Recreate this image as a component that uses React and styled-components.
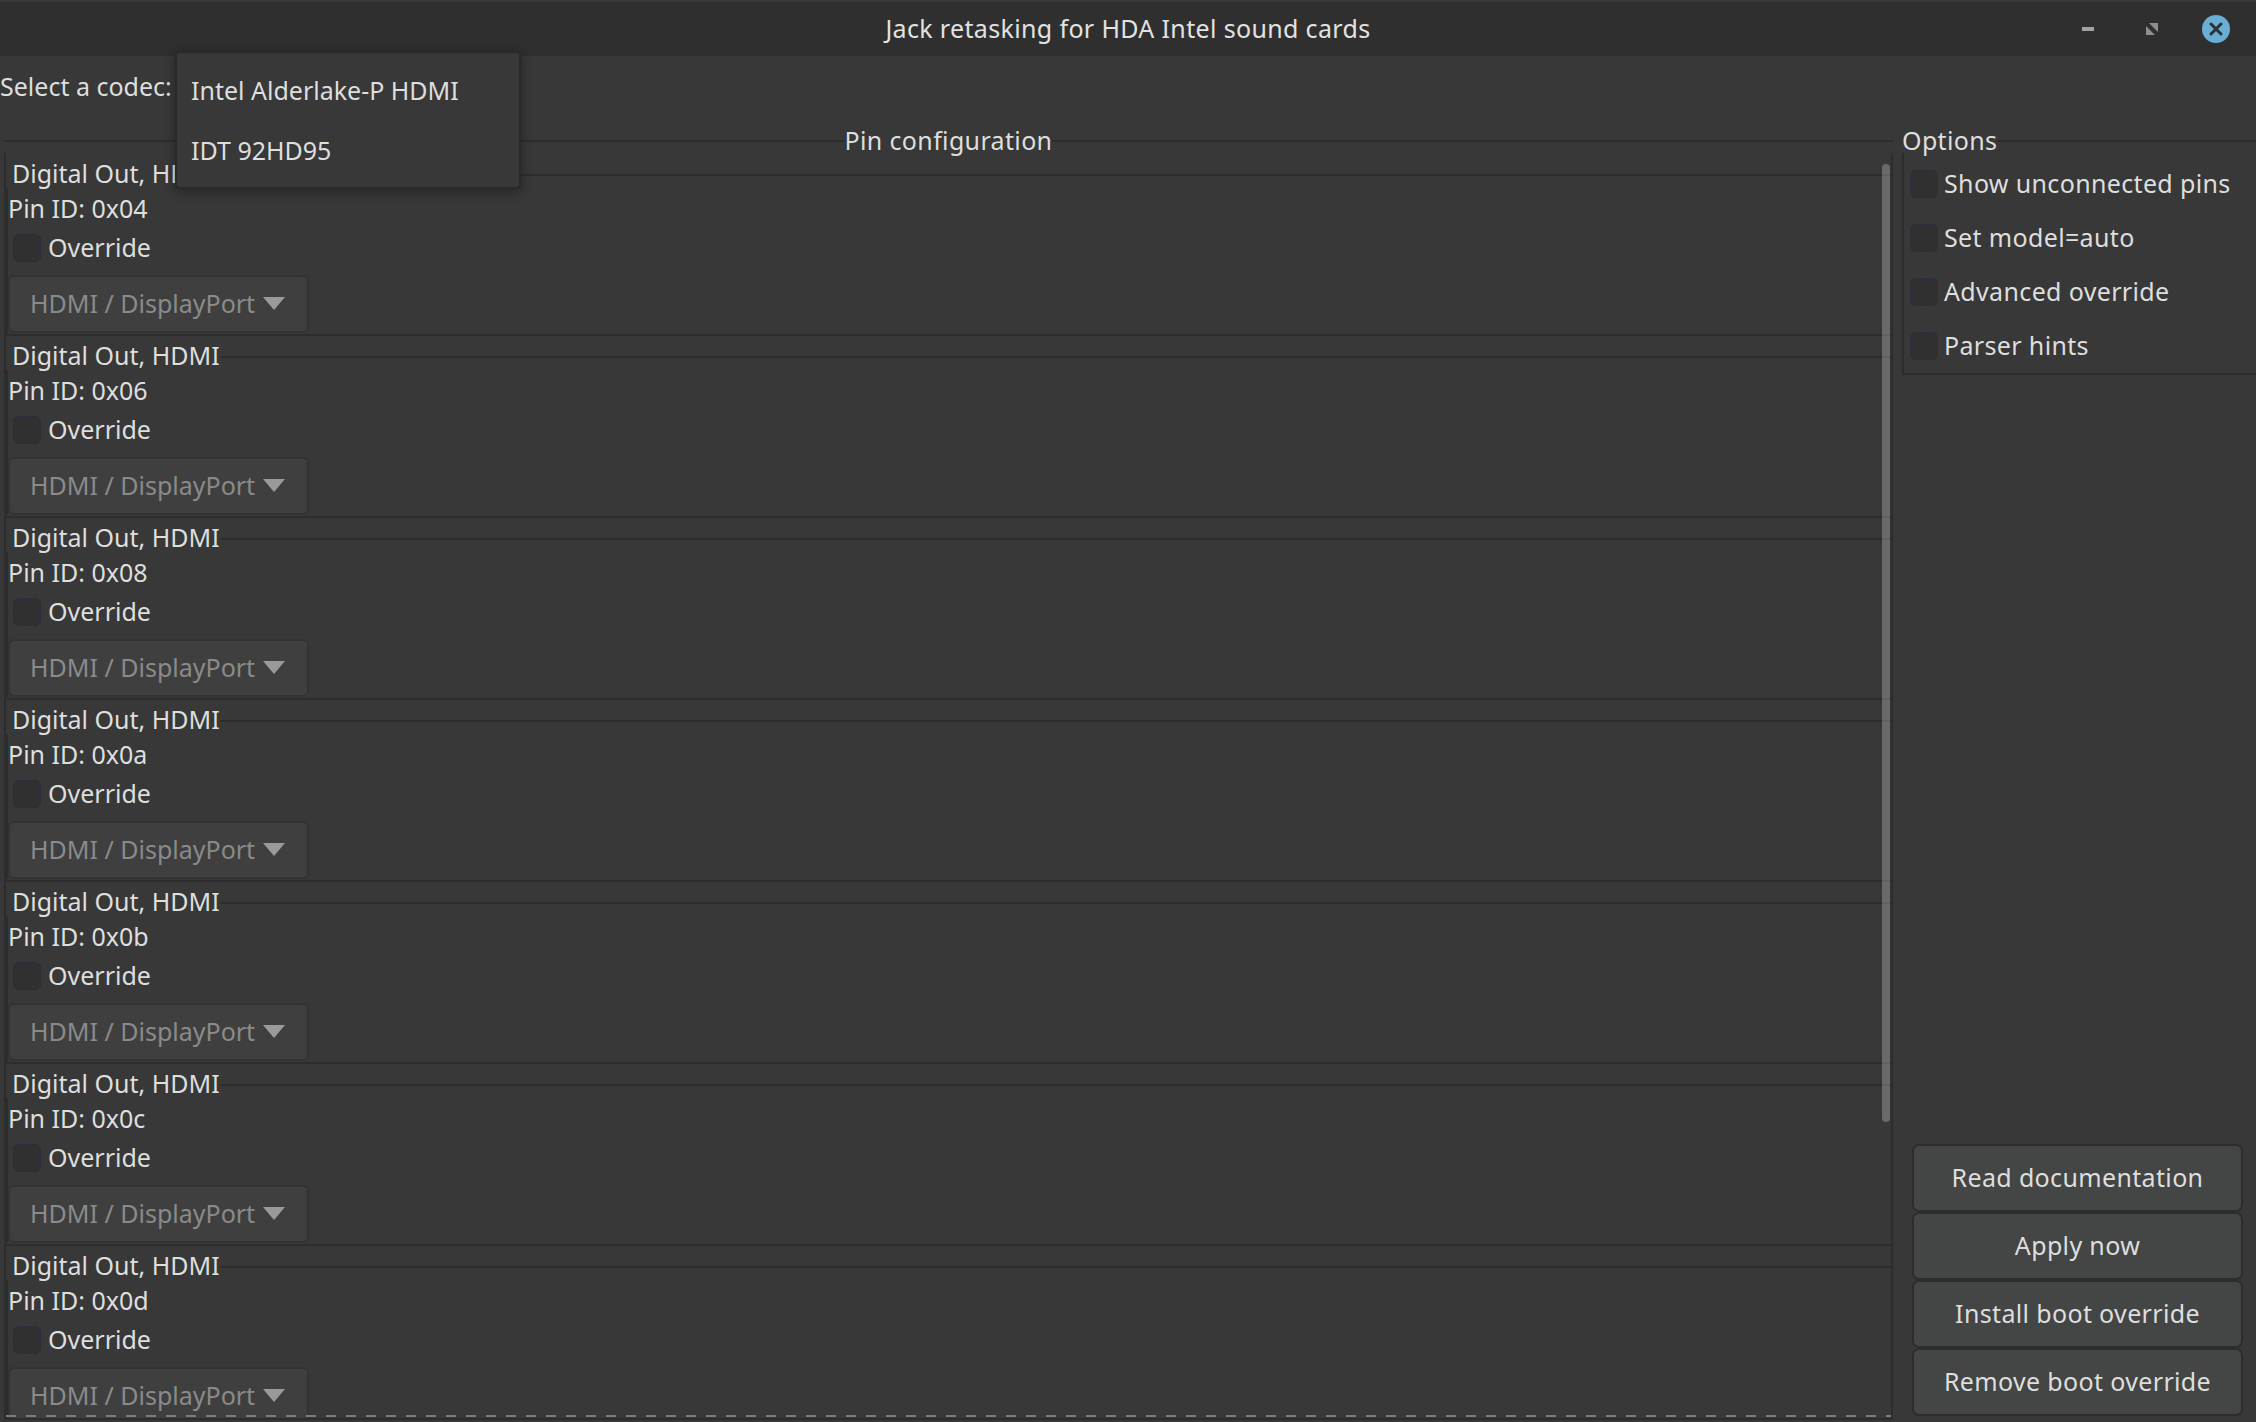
import React from "react";
import styled, { createGlobalStyle } from "styled-components";

const GlobalStyle = createGlobalStyle`
  html, body {
    margin: 0;
    padding: 0;
    background: #383838;
  }
  * {
    box-sizing: border-box;
  }
`;

const lineColor = "#2d2d2d";
const wideText = "0.35px";

const Window = styled.div`
  position: relative;
  width: 2256px;
  height: 1422px;
  overflow: hidden;
  display: flex;
  flex-flow: column;
  background: #383838;
  color: #dedede;
  font-family: "Noto Sans", sans-serif;
  font-size: 25px;
`;

const TitleBar = styled.header`
  display: grid;
  grid-template-columns: 1fr auto 1fr;
  align-items: center;
  height: 56px;
  flex: none;
  background: #2f2f2f;
  border-top: 2px solid #3a3a3a;
`;

const WindowTitle = styled.div`
  grid-column: 2;
  color: #e2e2e2;
  line-height: 50px;
  padding-bottom: 2px;
  letter-spacing: ${wideText};
`;

const WindowControls = styled.div`
  grid-column: 3;
  justify-self: end;
  display: flex;
  align-items: center;
  padding-right: 26px;
`;

const ControlIcon = styled.svg`
  display: block;
  margin-left: ${(props) => props.$gap}px;
`;

const CodecRow = styled.div`
  height: 73px;
  flex: none;
  line-height: 28px;
  padding-top: 16px;
`;

const Main = styled.main`
  flex: 1;
  min-height: 0;
  display: flex;
  gap: 9px;
  padding-left: 4px;
`;

const PinPanel = styled.section`
  width: 1889px;
  flex: none;
  display: flex;
  flex-flow: column;
  margin-bottom: 2px;
`;

const FrameHeader = styled.div`
  display: flex;
  align-items: center;
  height: 24px;
  flex: none;
`;

const FrameLine = styled.div`
  flex: 1;
  height: 2px;
  background: ${lineColor};
`;

const FrameLabel = styled.div`
  line-height: 22px;
  margin-bottom: 2px;
  letter-spacing: ${wideText};
`;

const PinBody = styled.div`
  position: relative;
  flex: 1;
  min-height: 0;
  overflow: hidden;
  padding-top: 1px;
  border: 2px solid ${lineColor};
  border-top: 0;
`;

const PinGroup = styled.div`
  height: 182px;
  padding-top: 3px;
  border-bottom: 2px solid ${lineColor};
`;

const GroupHeader = styled.div`
  display: flex;
  align-items: center;
  height: 36px;
  padding-left: 6px;
`;

const GroupTitle = styled.div`
  line-height: 32px;
  margin-bottom: 4px;
`;

const GroupBody = styled.div`
  margin-top: -5px;
  padding-top: 5px;
  height: 145px;
  border-left: 2px solid ${lineColor};
`;

const PinId = styled.div`
  line-height: 30px;
  height: 32px;
`;

const CheckRow = styled.label`
  display: flex;
  align-items: flex-start;
  gap: ${(props) => props.$gap}px;
  height: 28px;
  line-height: 26px;
  margin: ${(props) => props.$margin || "0"};
  letter-spacing: ${(props) => props.$spacing || "normal"};
`;

const CheckBox = styled.span`
  display: block;
  flex: none;
  width: 28px;
  height: 28px;
  border-radius: 6px;
  background: #303030;
  border: 1px solid #2a2e3a;
`;

const Combo = styled.div`
  display: flex;
  align-items: center;
  gap: 8px;
  width: 301px;
  height: 58px;
  margin-top: 13px;
  padding: 0 0 2px 20px;
  background: #3f3f3f;
  border: 2px solid #333333;
  border-radius: 6px;
  color: #8a8a8a;
`;

const ComboArrow = styled.span`
  width: 0;
  height: 0;
  border-left: 11.5px solid transparent;
  border-right: 11.5px solid transparent;
  border-top: 13px solid #9a9a9a;
`;

const ScrollThumb = styled.div`
  position: absolute;
  top: 11px;
  right: 1px;
  width: 8px;
  height: 958px;
  border-radius: 4px;
  background: rgba(255, 255, 255, 0.25);
`;

const Undershoot = styled.div`
  position: absolute;
  left: 0;
  right: 0;
  bottom: 1px;
  height: 2px;
  background: repeating-linear-gradient(to right, #7c7c7c 0 10px, transparent 10px 20px);
`;

const SideColumn = styled.aside`
  flex: 1;
  display: flex;
  flex-flow: column;
`;

const OptionsBody = styled.div`
  display: flex;
  flex-flow: column;
  gap: 26px;
  height: 222px;
  padding: 17px 0 0 6px;
  border: 2px solid ${lineColor};
  border-top: 0;
  border-right: 0;
`;

const ButtonStack = styled.div`
  margin: auto 13px 6px 10px;
  display: flex;
  flex-flow: column;
`;

const Button = styled.button`
  height: 68px;
  background: #444645;
  border: 2px solid #2d2d2d;
  border-radius: 7px;
  color: #dedede;
  font: inherit;
  letter-spacing: ${wideText};
  padding: 0 0 2px;
`;

const CodecMenu = styled.div`
  position: absolute;
  left: 175px;
  top: 51px;
  width: 346px;
  height: 138px;
  display: flex;
  flex-flow: column;
  justify-content: center;
  padding-left: 14px;
  gap: 30px;
  background: #383838;
  border: 2px solid #292929;
  border-radius: 4px;
  box-shadow: 0 3px 12px rgba(0, 0, 0, 0.35);
`;

const MenuItem = styled.div`
  line-height: 30px;
`;

const pins = ["0x04", "0x06", "0x08", "0x0a", "0x0b", "0x0c", "0x0d"];
const options = ["Show unconnected pins", "Set model=auto", "Advanced override", "Parser hints"];
const actions = ["Read documentation", "Apply now", "Install boot override", "Remove boot override"];

const App = () => (
  <Window>
    <GlobalStyle />
    <TitleBar>
      <WindowTitle>Jack retasking for HDA Intel sound cards</WindowTitle>
      <WindowControls>
        <ControlIcon width="12" height="4" viewBox="0 0 12 4">
          <rect width="12" height="4" fill="#a3a3a3" />
        </ControlIcon>
        <ControlIcon $gap={52} width="12" height="12" viewBox="0 0 12 12">
          <path d="M0 3 L0 12 L9 12 Z M3 0 L12 0 L12 9 Z" fill="#8f8f8f" />
        </ControlIcon>
        <ControlIcon $gap={44} width="28" height="28" viewBox="0 0 28 28">
          <circle cx="14" cy="14" r="14" fill="#6aadd5" />
          <path d="M9 9 L19 19 M19 9 L9 19" stroke="#2b3338" strokeWidth="3" strokeLinecap="round" />
        </ControlIcon>
      </WindowControls>
    </TitleBar>

    <CodecRow>Select a codec:</CodecRow>

    <Main>
      <PinPanel>
        <FrameHeader>
          <FrameLine />
          <FrameLabel>Pin configuration</FrameLabel>
          <FrameLine />
        </FrameHeader>
        <PinBody>
          {pins.map((pin) => (
            <PinGroup key={pin}>
              <GroupHeader>
                <GroupTitle>Digital Out, HDMI</GroupTitle>
                <FrameLine />
              </GroupHeader>
              <GroupBody>
                <PinId>Pin ID: {pin}</PinId>
                <CheckRow $gap={7} $margin="9px 0 0 5px">
                  <CheckBox />
                  Override
                </CheckRow>
                <Combo>
                  HDMI / DisplayPort
                  <ComboArrow />
                </Combo>
              </GroupBody>
            </PinGroup>
          ))}
          <ScrollThumb />
          <Undershoot />
        </PinBody>
      </PinPanel>

      <SideColumn>
        <FrameHeader>
          <FrameLabel>Options</FrameLabel>
          <FrameLine />
        </FrameHeader>
        <OptionsBody>
          {options.map((option) => (
            <CheckRow key={option} $gap={6} $spacing={wideText}>
              <CheckBox />
              {option}
            </CheckRow>
          ))}
        </OptionsBody>
        <ButtonStack>
          {actions.map((action) => (
            <Button key={action}>{action}</Button>
          ))}
        </ButtonStack>
      </SideColumn>
    </Main>

    <CodecMenu>
      <MenuItem>Intel Alderlake-P HDMI</MenuItem>
      <MenuItem>IDT 92HD95</MenuItem>
    </CodecMenu>
  </Window>
);

export default App;
